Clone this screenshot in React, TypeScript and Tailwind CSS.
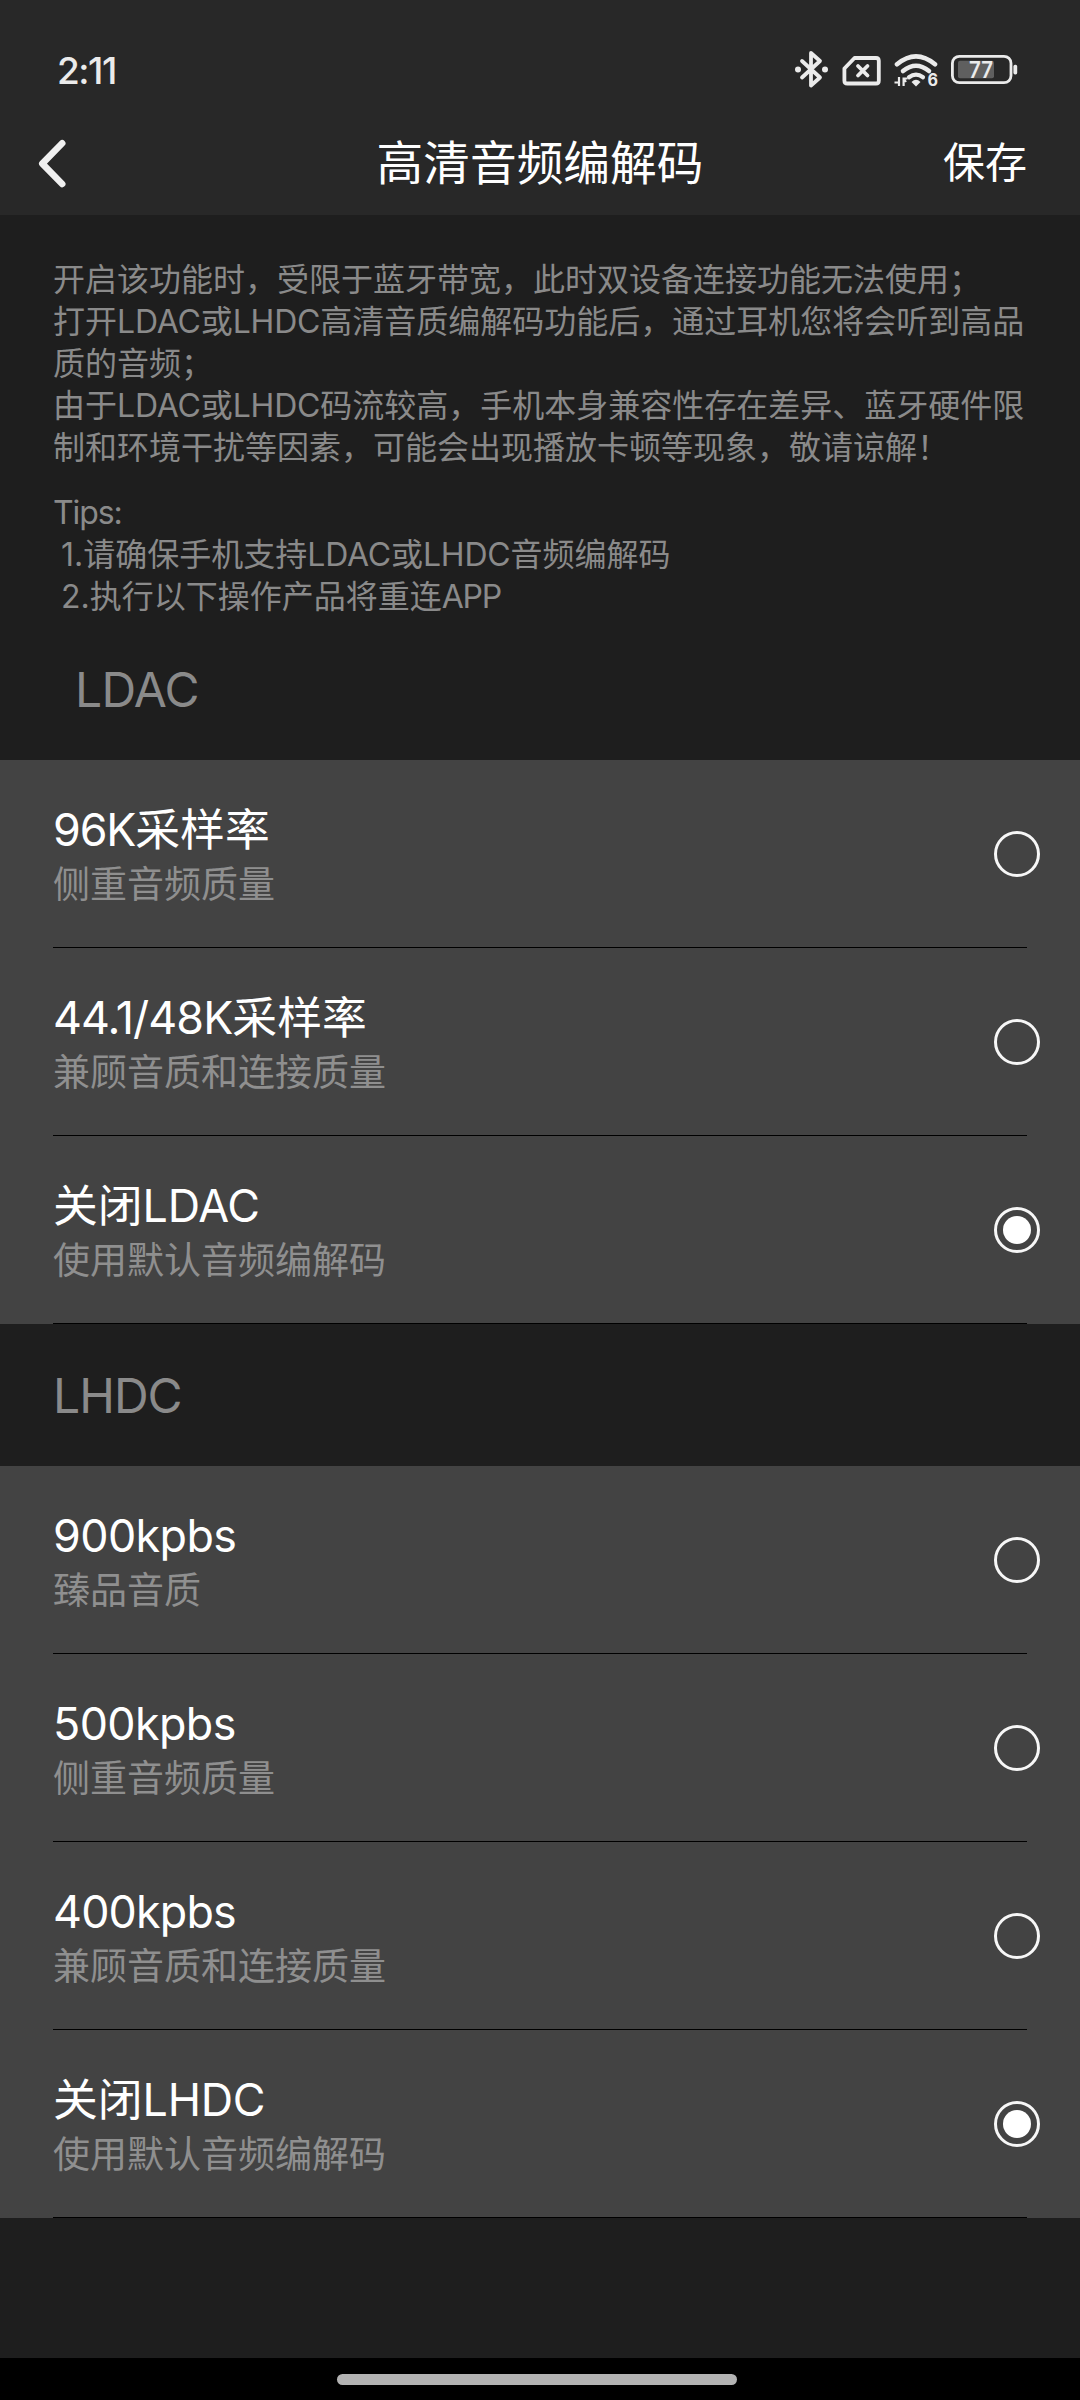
import React, { useState } from 'react';

interface CodecOption {
  id: string;
  title: React.ReactNode;
  desc: string;
}

const Latin: React.FC<{ children: React.ReactNode }> = ({ children }) => (
  <span className="tracking-[-0.006em]">{children}</span>
);

const LDAC_OPTIONS: CodecOption[] = [
  { id: '96k', title: <><span className="tracking-[-0.025em]">96K</span>采样率</>, desc: '侧重音频质量' },
  { id: '48k', title: <><span className="tracking-[-0.02em]">44.1/48K</span>采样率</>, desc: '兼顾音质和连接质量' },
  { id: 'off', title: <>关闭<Latin>LDAC</Latin></>, desc: '使用默认音频编解码' },
];

const LHDC_OPTIONS: CodecOption[] = [
  { id: '900', title: <span className="tracking-[-0.013em]">900kpbs</span>, desc: '臻品音质' },
  { id: '500', title: <span className="tracking-[-0.013em]">500kpbs</span>, desc: '侧重音频质量' },
  { id: '400', title: <span className="tracking-[-0.018em]">400kpbs</span>, desc: '兼顾音质和连接质量' },
  { id: 'off', title: <>关闭<Latin>LHDC</Latin></>, desc: '使用默认音频编解码' },
];

const StatusBar: React.FC = () => (
  <div className="flex h-[110px] items-start justify-between pl-[57px] pr-[62px] pt-[50px] text-[#ebebeb]">
    <span className="text-[37px] leading-[41px] font-medium tracking-[-0.04em]">2:11</span>
    <div className="flex items-start">
      <svg width="34" height="40" viewBox="795 50 34 40" fill="none" stroke="currentColor" strokeWidth="3.8" strokeLinecap="round" strokeLinejoin="round">
        <path d="M802 61 L820 77.5 L811 85.5 V53 L820 61 L802 77.5" />
        <circle cx="798" cy="69.5" r="3" fill="currentColor" stroke="none" />
        <circle cx="825" cy="69.5" r="3" fill="currentColor" stroke="none" />
      </svg>
      <svg className="ml-[12px]" width="41" height="40" viewBox="841 50 41 40" fill="none" stroke="currentColor" strokeWidth="3.8" strokeLinecap="round" strokeLinejoin="round">
        <path d="M854.5 58 H876 Q878.8 58 878.8 60.8 V80.7 Q878.8 83.5 876 83.5 H847.3 Q844.4 83.5 844.4 80.7 V68.5 Z" />
        <path d="M858 66 L867.5 75.5 M867.5 66 L858 75.5" />
      </svg>
      <svg className="ml-[11px]" width="46" height="40" viewBox="893 50 46 40" fill="none" stroke="currentColor" strokeWidth="4.6" strokeLinecap="round">
        <path d="M897 64.3 Q916 48.5 935 64.3" />
        <path d="M903 71 Q916 60.5 929 71" />
        <path d="M909 77.2 Q916 72 923 77.2" strokeWidth="4.2" />
        <path d="M911.5 82 Q916 77.5 920.5 82 L916 86.5 Z" fill="currentColor" stroke="none" />
        <path d="M894.5 82.5 H899 V77 M899 77 V86 M903.6 86 V78.5 H907.5 M903.6 78.5 L906 82" strokeWidth="2.2" strokeLinecap="butt" />
        <text x="927.6" y="86.2" fontSize="17.5" fontWeight="700" fill="currentColor" stroke="none" textLength="10.5" lengthAdjust="spacingAndGlyphs">6</text>
      </svg>
      <svg className="ml-[12px]" width="67" height="40" viewBox="951 50 67 40">
        <rect x="952.4" y="56.3" width="58.6" height="26.4" rx="7" fill="none" stroke="currentColor" strokeWidth="2.8" />
        <rect x="958" y="60.8" width="36" height="17.5" rx="2" fill="#5f5f5f" />
        <rect x="1013.4" y="64.8" width="3.8" height="9.6" rx="1.6" fill="currentColor" />
        <text x="969" y="78" fontSize="23" fontWeight="600" fill="currentColor" textLength="24" lengthAdjust="spacingAndGlyphs">77</text>
      </svg>
    </div>
  </div>
);

const Header: React.FC = () => (
  <header className="h-[215px] bg-[#282828]">
    <StatusBar />
    <div className="grid h-[105px] grid-cols-[200px_1fr_200px] items-center text-white">
      <button type="button" className="ml-[36px] w-[34px]" aria-label="返回">
        <svg width="34" height="54" viewBox="36 135 34 54" fill="none" stroke="#f0f0f0" strokeWidth="6.6" strokeLinecap="round" strokeLinejoin="round">
          <path d="M62.2 142.3 L42.3 162.6 L62.2 183" />
        </svg>
      </button>
      <h1 className="text-center text-[46.7px] leading-[60px]">高清音频编解码</h1>
      <button type="button" className="pr-[53px] text-right text-[42px] leading-[60px]">保存</button>
    </div>
  </header>
);

const Radio: React.FC<{ checked: boolean }> = ({ checked }) => (
  <span className="flex h-[46px] w-[46px] shrink-0 items-center justify-center rounded-full border-[3px] border-[#f7f7f7]">
    {checked && <span className="h-[28px] w-[28px] rounded-full bg-white" />}
  </span>
);

interface OptionListProps {
  options: CodecOption[];
  value: string;
  onChange: (id: string) => void;
}

const OptionList: React.FC<OptionListProps> = ({ options, value, onChange }) => (
  <ul className="bg-[#434343]">
    {options.map((opt) => (
      <li key={opt.id} className="h-[188px] pl-[53px]" onClick={() => onChange(opt.id)}>
        <div className="flex h-[187px] items-center justify-between pr-[40px]">
          <div className="pt-[5px]">
            <p className="text-[44.8px] leading-[58px] text-white">{opt.title}</p>
            <p className="text-[37px] leading-[52px] text-[#8f8f8f]">{opt.desc}</p>
          </div>
          <Radio checked={value === opt.id} />
        </div>
        <div className="mr-[53px] h-px bg-black" />
      </li>
    ))}
  </ul>
);

const App: React.FC = () => {
  const [ldac, setLdac] = useState('off');
  const [lhdc, setLhdc] = useState('off');

  return (
    <div className="flex h-[2400px] w-[1080px] flex-col overflow-hidden bg-[#1e1e1e] font-['Inter','Noto_Sans_CJK_SC',sans-serif]" lang="zh-CN">
      <Header />
      <section className="h-[545px] whitespace-nowrap pl-[53px] pt-[44px] text-[32px] leading-[42px] text-[#8a8a8a]">
        <p>开启该功能时，受限于蓝牙带宽，此时双设备连接功能无法使用；</p>
        <p>打开<Latin>LDAC</Latin>或<Latin>LHDC</Latin>高清音质编解码功能后，通过耳机您将会听到高品</p>
        <p>质的音频；</p>
        <p>由于<Latin>LDAC</Latin>或<Latin>LHDC</Latin>码流较高，手机本身兼容性存在差异、蓝牙硬件限</p>
        <p>制和环境干扰等因素，可能会出现播放卡顿等现象，敬请谅解！</p>
        <p className="mt-[23px] tracking-[-0.035em]">Tips:</p>
        <p className="pl-[8px]">1.请确保手机支持<Latin>LDAC</Latin>或<Latin>LHDC</Latin>音频编解码</p>
        <p className="pl-[8px]">2.执行以下操作产品将重连<span className="tracking-[-0.04em]">APP</span></p>
        <h2 className="ml-[22px] mt-[42px] text-[48px] leading-[60px]"><span className="tracking-[-0.015em]">LDAC</span></h2>
      </section>
      <OptionList options={LDAC_OPTIONS} value={ldac} onChange={setLdac} />
      <h2 className="h-[142px] pl-[53px] pt-[42px] text-[48px] leading-[60px] text-[#8a8a8a]"><span className="tracking-[-0.02em]">LHDC</span></h2>
      <OptionList options={LHDC_OPTIONS} value={lhdc} onChange={setLhdc} />
      <footer className="mt-auto flex h-[42px] justify-center bg-black pt-[16px]">
        <div className="mr-[7px] h-[11px] w-[400px] rounded-full bg-[#b3b3b3]" />
      </footer>
    </div>
  );
};

export default App;
